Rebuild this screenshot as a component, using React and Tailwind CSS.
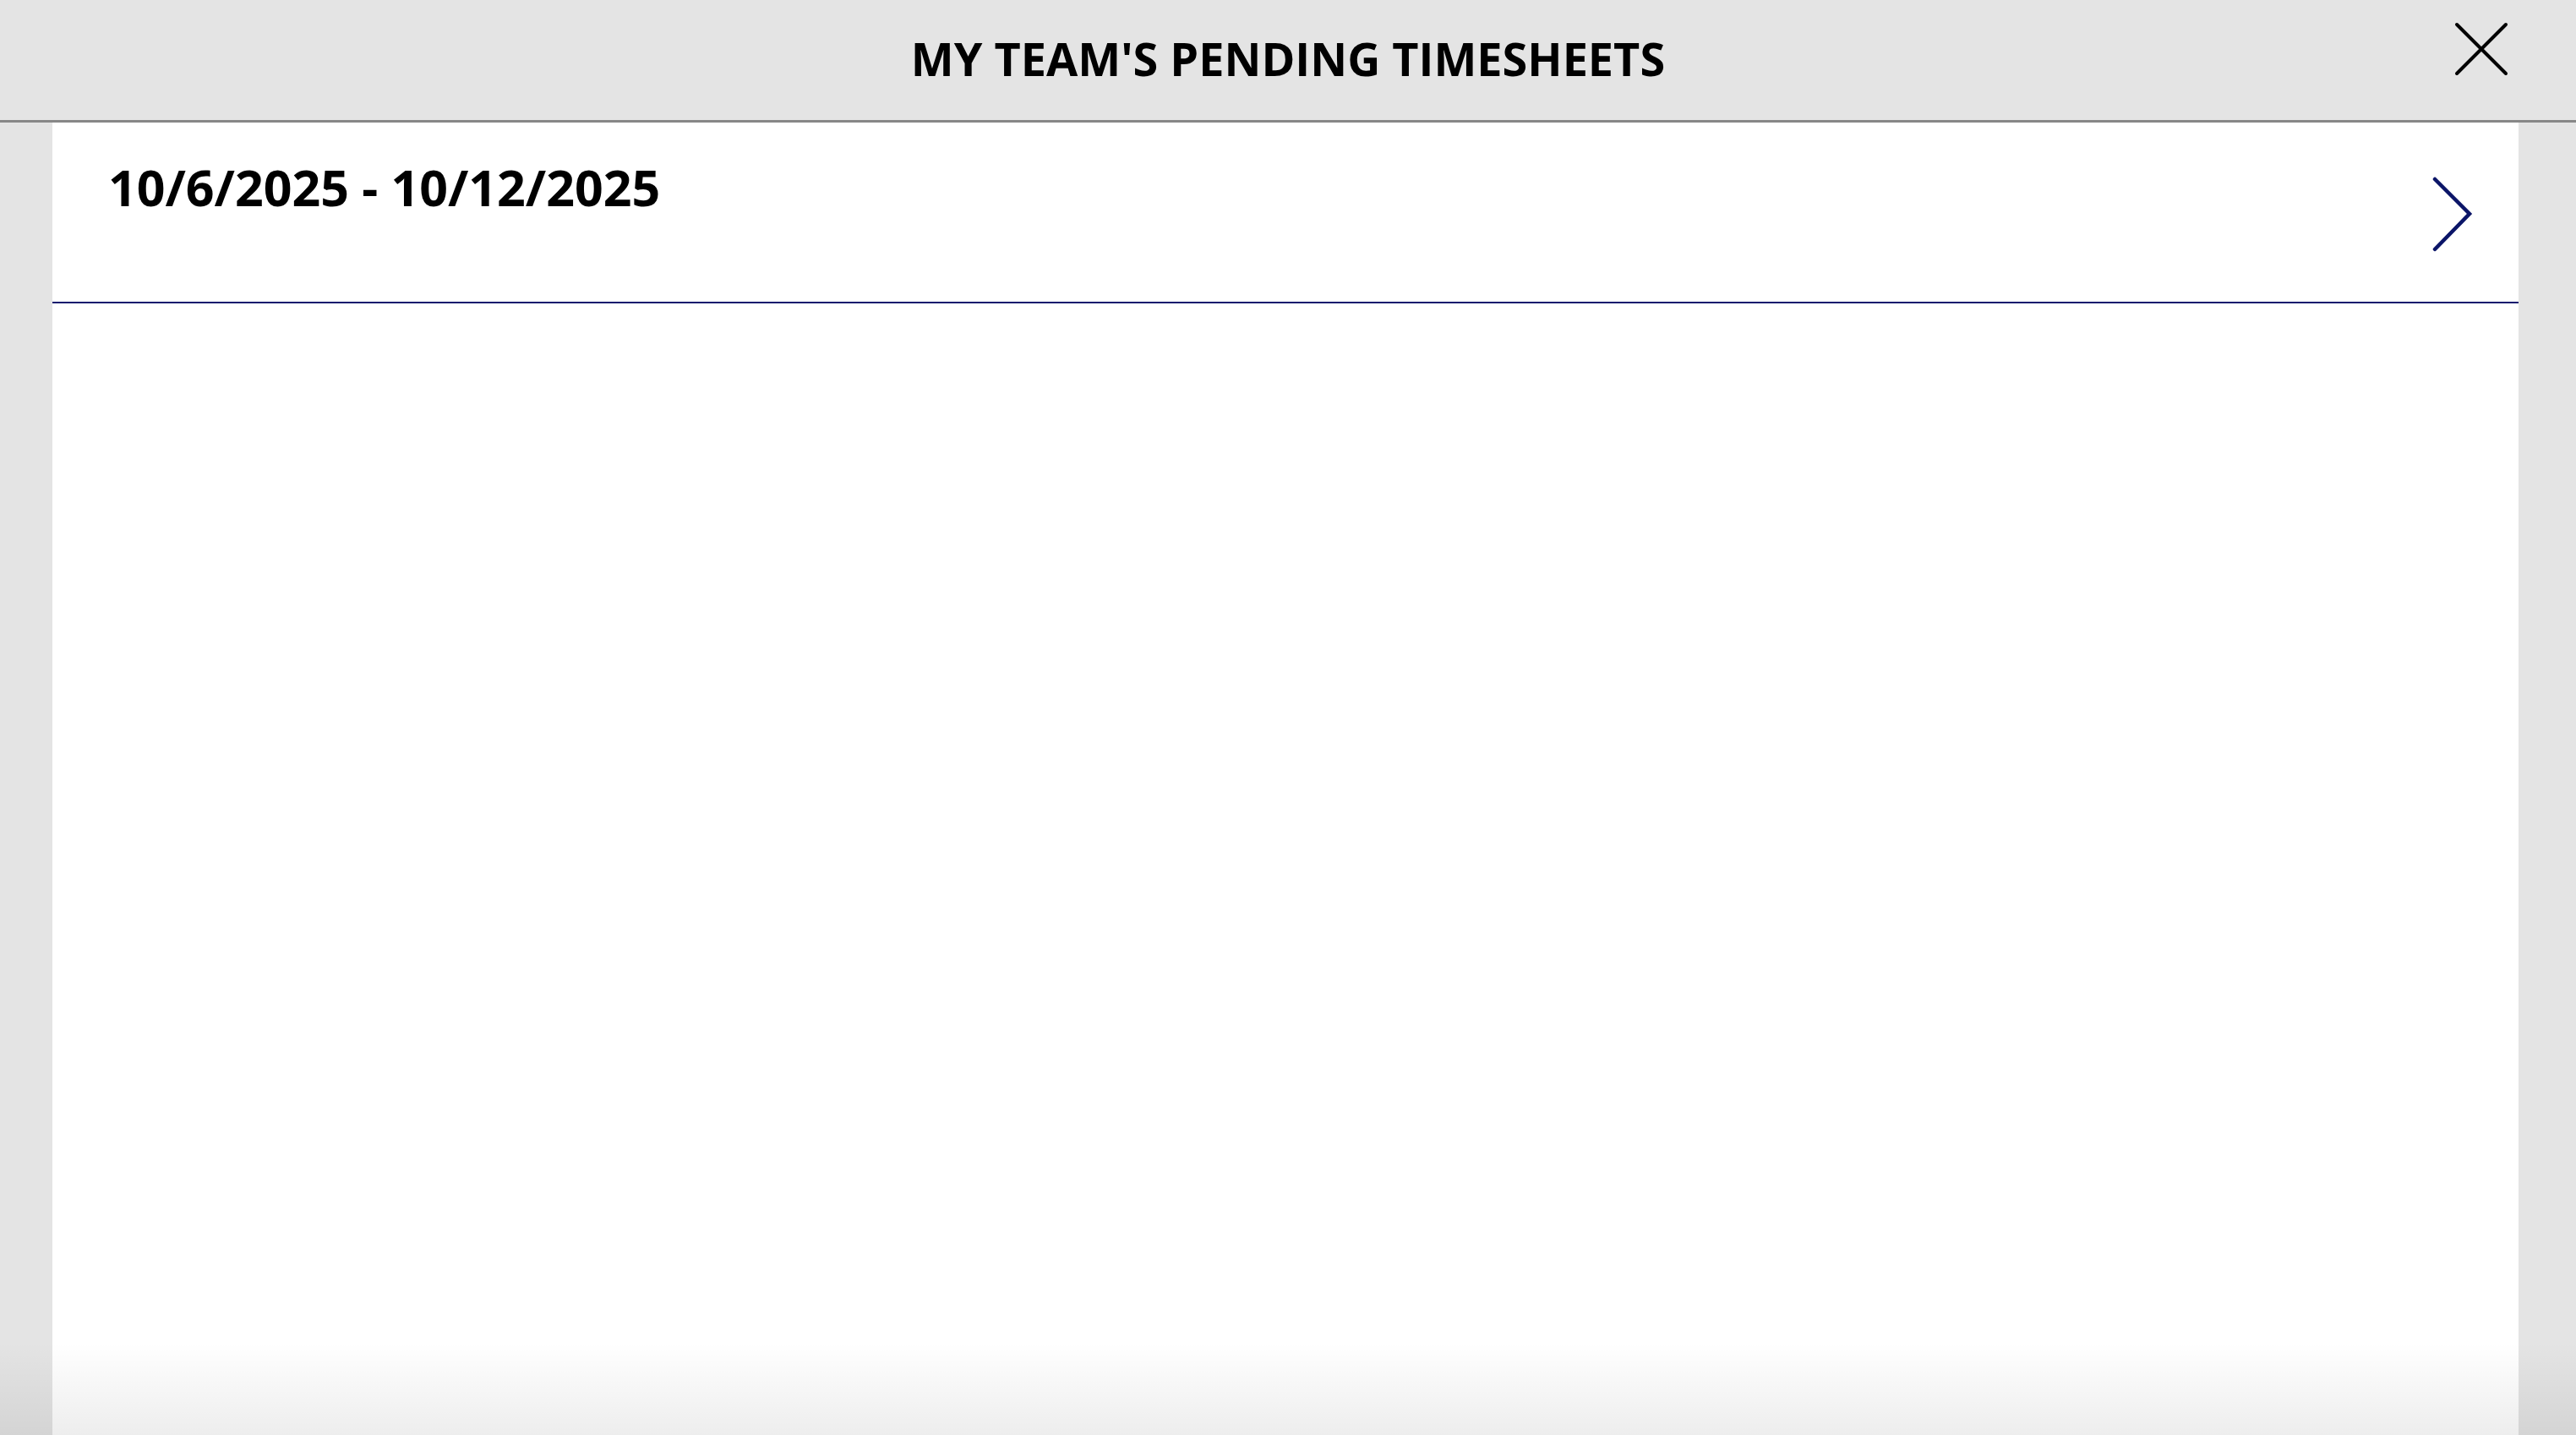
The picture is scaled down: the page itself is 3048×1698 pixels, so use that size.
import React from "react";

export default function App() {
  return (
    <div className="relative w-[3048px] h-[1698px] bg-[#e4e4e4] overflow-hidden flex flex-col" style={{ fontFamily: '"Open Sans", "Liberation Sans", sans-serif' }}>
      <header className="h-[145px] shrink-0 bg-[#e4e4e4] border-b-[3px] border-[#878787] flex items-center justify-center relative">
        <h1 className="text-[54px] font-bold text-black leading-none mb-[4px]">MY TEAM'S PENDING TIMESHEETS</h1>
        <button className="absolute right-[80px] top-[26px] w-[64px] h-[64px] flex items-center justify-center">
          <svg width="64" height="64" viewBox="0 0 64 64">
            <path d="M3 3 L61 61 M61 3 L3 61" stroke="#000" strokeWidth="4" fill="none" strokeLinecap="round" />
          </svg>
        </button>
      </header>
      <div className="flex-1 flex pl-[62px] pr-[68px]">
        <main className="flex-1 bg-white flex flex-col">
          <div className="h-[214px] border-b-2 border-[#0f1a6e] flex items-start justify-between pl-[66px] pr-[52px]">
            <span className="mt-[36px] text-[59px] font-bold text-black leading-[80px]">10/6/2025 - 10/12/2025</span>
            <svg className="mt-[64px]" width="50" height="90" viewBox="0 0 50 90">
              <path d="M3 3 L44 44 L3 86" stroke="#0b1568" strokeWidth="4.5" fill="none" strokeLinecap="round" strokeLinejoin="miter" />
            </svg>
          </div>
        </main>
      </div>
      <div className="pointer-events-none absolute left-0 right-0 bottom-0 h-[110px] bg-gradient-to-b from-transparent to-black/[0.07]"></div>
    </div>
  );
}
